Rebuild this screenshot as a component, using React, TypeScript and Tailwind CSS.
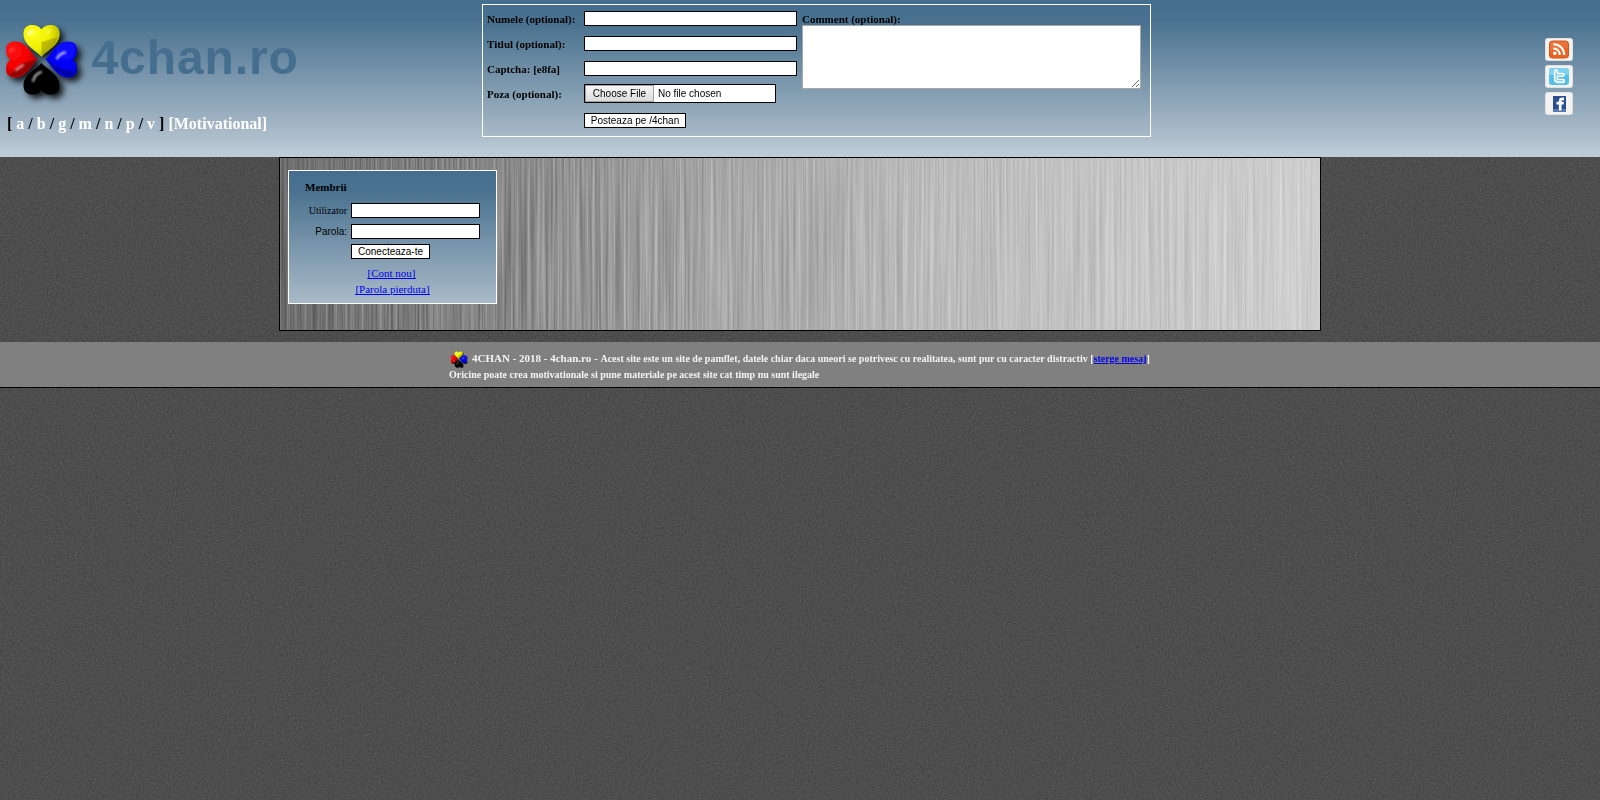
import React from 'react';

const HEART = 'M0 0 C-5 -6 -18 -11 -18 -22.5 C-18 -29 -14 -31.5 -9.5 -31.5 C-5 -31.5 -2 -30 0 -27 C2 -30 5 -31.5 9.5 -31.5 C14 -31.5 18 -29 18 -22.5 C18 -11 5 -6 0 0 Z';

function Clover({ className, id }: { className: string; id: string }) {
  const petals = [
    { x: 41.5, y: 38.5, r: 0, cx: -8, cy: -23, light: '#ffff20', mid: '#eeee00', dark: '#a0a000' },
    { x: 37.5, y: 41.5, r: -90, cx: 9, cy: -25, light: '#ff1010', mid: '#f50000', dark: '#900000' },
    { x: 45.5, y: 41.5, r: 90, cx: -9, cy: -20, light: '#1010ff', mid: '#0000f5', dark: '#0000a0' },
    { x: 41.5, y: 45, r: 180, cx: 0, cy: -20, light: '#000000', mid: '#000000', dark: '#000000' },
  ];
  return (
    <svg className={className} viewBox="0 0 90 90">
      <defs>
        <filter id={`${id}-shadow`} x="-30%" y="-30%" width="170%" height="170%">
          <feDropShadow dx="4" dy="4" stdDeviation="3" floodColor="#000" floodOpacity="0.85" />
        </filter>
        <filter id={`${id}-soft`} x="-50%" y="-50%" width="200%" height="200%">
          <feGaussianBlur stdDeviation="0.9" />
        </filter>
        {petals.map((p, i) => (
          <radialGradient key={i} id={`${id}-${i}`} gradientUnits="userSpaceOnUse" cx={p.cx} cy={p.cy} r="32">
            <stop offset="0" stopColor={p.light} />
            <stop offset="0.5" stopColor={p.mid} />
            <stop offset="1" stopColor={p.dark} />
          </radialGradient>
        ))}
      </defs>
      <g filter={`url(#${id}-shadow)`}>
        {petals.map((p, i) => (
          <path key={i} fill={`url(#${id}-${i})`} transform={`translate(${p.x} ${p.y}) rotate(${p.r})`} d={HEART} />
        ))}
      </g>
      <path d="M41.5 37.5 L41.5 24 L58 19 Q56 29 41.5 37.5Z" fill="#777700" opacity="0.4" />
      <path d="M36 42 L22 45 L10 57 Q22 62 36 42Z" fill="#600000" opacity="0.5" />
      <path d="M47 43 L60 50 L75 55 Q66 63 47 43Z" fill="#000060" opacity="0.4" />
      <g fill="none" stroke="#fff" strokeLinecap="round" filter={`url(#${id}-soft)`}>
        <path d="M29 15.5 L32 13.5" strokeWidth="3.4" opacity="0.65" />
        <path d="M47 15 L50 12.5" strokeWidth="2.6" opacity="0.35" />
        <path d="M13 31 L10 33" strokeWidth="3" opacity="0.2" />
        <path d="M16 52 L23 47" strokeWidth="1.8" opacity="0.75" />
        <path d="M57 40.5 Q59 36 65 34.5" strokeWidth="2" opacity="0.85" />
        <path d="M33 63 Q35 56 41 54" strokeWidth="2" opacity="0.75" />
      </g>
    </svg>
  );
}

function GrainTexture() {
  return (
    <svg className="[grid-area:1/1] h-full min-h-[800px] w-full" aria-hidden="true">
      <filter id="grain" x="0" y="0" width="100%" height="100%" colorInterpolationFilters="sRGB">
        <feTurbulence type="fractalNoise" baseFrequency="0.6" numOctaves="3" seed="4" />
        <feColorMatrix values="0.13 0 0 0 0.237  0.13 0 0 0 0.237  0.13 0 0 0 0.237  0 0 0 0 1" />
      </filter>
      <rect width="100%" height="100%" filter="url(#grain)" />
    </svg>
  );
}

function BrushedMetal() {
  return (
    <svg className="[grid-area:1/1] h-[172px] w-[1040px]" aria-hidden="true">
      <defs>
        <linearGradient id="metal">
          <stop offset="0" stopColor="#6d6d6d" />
          <stop offset="0.2" stopColor="#868686" />
          <stop offset="0.4" stopColor="#a3a3a3" />
          <stop offset="0.6" stopColor="#b8b8b8" />
          <stop offset="0.8" stopColor="#c5c5c5" />
          <stop offset="1" stopColor="#cecece" />
        </linearGradient>
        <filter id="streaks" x="0" y="0" width="100%" height="100%" colorInterpolationFilters="sRGB">
          <feTurbulence type="fractalNoise" baseFrequency="0.45 0.005" numOctaves="3" seed="11" />
          <feColorMatrix values="0.4 0 0 0 0.3  0.4 0 0 0 0.3  0.4 0 0 0 0.3  0 0 0 0 1" />
        </filter>
      </defs>
      <rect width="1040" height="172" fill="url(#metal)" />
      <rect width="1040" height="172" filter="url(#streaks)" className="mix-blend-overlay" />
    </svg>
  );
}

function Label({ children }: { children: React.ReactNode }) {
  return <div className="h-[25px] text-[11px] leading-[15px] font-bold">{children}</div>;
}

const BOARDS = ['a', 'b', 'g', 'm', 'n', 'p', 'v'];

function Header() {
  return (
    <header className="flex h-[157px] bg-linear-[180deg,#456e8e_0px,#4a7290_20px,#809bb0_84px,#a9bac8_132px,#bfcdd9_157px]">
      <div className="flex w-[482px] flex-col">
        <div className="flex h-[112px] pt-[18px]">
          <Clover id="logo" className="h-[90px] w-[90px]" />
          <div className="pt-[12px] pl-[1.5px] font-['Liberation_Sans',sans-serif] text-[48px] leading-[56px] font-bold tracking-[0.9px] text-[#456e8e]">4chan.ro</div>
        </div>
        <nav className="pl-[7px] text-[16px] leading-[24px] font-bold whitespace-pre">
          {'[ '}
          {BOARDS.map((b, i) => (
            <span key={b}>
              {i > 0 && ' / '}
              <a className="text-white">{b}</a>
            </span>
          ))}
          {' ] '}
          <a className="text-white">[Motivational]</a>
        </nav>
      </div>

      <form className="mt-[4px] flex h-[133px] w-[669px] border border-white bg-linear-[180deg,#456e8e_0px,#4a7290_20px,#809bb0_84px,#a9bac8_132px] pl-[4px]">
        <div className="w-[97px] pt-[7px]">
          <Label>Numele (optional):</Label>
          <Label>Titlul (optional):</Label>
          <Label>Captcha: [e8fa]</Label>
          <Label>Poza (optional):</Label>
        </div>
        <div className="flex w-[218px] flex-col items-start pt-[6px] font-['Liberation_Sans',sans-serif] text-[10px]">
          <input className="mb-[10px] h-[15px] w-[213px] border border-black bg-white" />
          <input className="mb-[10px] h-[15px] w-[213px] border border-black bg-white" />
          <input className="mb-[8px] h-[15px] w-[213px] border border-black bg-white" />
          <div className="mb-[10px] flex h-[19px] w-[192px] border border-black bg-white text-[10px] leading-[15px]">
            <button type="button" className="h-[17px] w-[69px] border border-[#a0a0a0] bg-linear-to-b from-[#f6f6f6] to-[#dcdcdc]">Choose File</button>
            <span className="pl-[4px] leading-[17px]">No file chosen</span>
          </div>
          <button type="button" className="h-[15px] w-[102px] border border-black bg-white leading-[13px]">Posteaza pe /4chan</button>
        </div>
        <div className="pt-[7px]">
          <div className="h-[13px] text-[11px] leading-[15px] font-bold">Comment (optional):</div>
          <textarea className="block h-[64px] w-[339px] resize border border-[#a9a9a9] bg-white" />
        </div>
      </form>

      <div className="ml-auto flex flex-col gap-[4px] pt-[38px] pr-[27px]">
        <svg className="h-[23px] w-[28px]" viewBox="0 0 28 23">
          <rect x="0.5" y="0.5" width="27" height="22" rx="2" fill="#f4f2f1" stroke="#dfe1e3" />
          <rect x="4.5" y="3" width="19" height="17" rx="3" fill="#ea6325" stroke="#d2561c" />
          <path d="M5 14 V6 Q5 3.5 8 3.5 H20 Q23 3.5 23 6 V10 Q14 9 5 14Z" fill="#f58a50" opacity="0.4" />
          <circle cx="9.8" cy="15.2" r="1.8" fill="#fff" />
          <path d="M8.2 10.5 A6.3 6.3 0 0 1 14.8 17 M8.2 6.2 A10.5 10.5 0 0 1 19.2 17" fill="none" stroke="#fff" strokeWidth="2.1" />
        </svg>
        <svg className="h-[23px] w-[28px]" viewBox="0 0 28 23">
          <rect x="0.5" y="0.5" width="27" height="22" rx="2" fill="#f4f2f1" stroke="#dfe1e3" />
          <rect x="4" y="3" width="20" height="17" rx="3" fill="#55c0e6" />
          <path d="M4 10 V6 Q4 3 7 3 H21 Q24 3 24 6 V10Z" fill="#7fd3ef" />
          <path d="M11 6.5 V13.5 Q11 16 13.5 16 H18 M11 9.9 H17.5" fill="none" stroke="#fff" strokeWidth="4.4" strokeLinecap="round" />
          <path d="M11 6.5 V13 Q11 15.8 13.5 15.8 H18 M11 10 H17.5" fill="none" stroke="#8fd6ee" strokeWidth="1.4" strokeLinecap="round" />
        </svg>
        <svg className="h-[23px] w-[28px]" viewBox="0 0 28 23">
          <rect x="0.5" y="0.5" width="27" height="22" rx="2" fill="#f4f2f1" stroke="#dfe1e3" />
          <rect x="8" y="4" width="13" height="16" fill="#294f92" />
          <rect x="8" y="17" width="13" height="3" fill="#5878b0" />
          <path d="M15.2 18.5 V9 Q15.2 6.9 17.3 6.9 H19 M11.5 11.2 H18.7" fill="none" stroke="#fff" strokeWidth="2.7" />
        </svg>
      </div>
    </header>
  );
}

function Members() {
  return (
    <div className="[grid-area:1/1] z-10 mt-[12px] ml-[8px] h-[134px] w-[209px] self-start border border-white bg-linear-[180deg,#456e8e_0px,#4a7290_20px,#809bb0_84px,#a9bac8_132px]">
      <div className="h-[32px] pt-[9px] pl-[16px] text-[11px] leading-[15px] font-bold">Membrii</div>
      <div className="flex h-[21px]">
        <div className="mr-[4px] w-[58px] text-right text-[10px] leading-[15px]">Utilizator</div>
        <input className="h-[15px] w-[129px] border border-black bg-white" />
      </div>
      <div className="flex h-[20px]">
        <div className="mr-[4px] w-[58px] text-right font-['Liberation_Sans',sans-serif] text-[10px] leading-[15px]">Parola:</div>
        <input className="h-[15px] w-[129px] border border-black bg-white" />
      </div>
      <button type="button" className="ml-[62px] block h-[15px] w-[79px] border border-black bg-white font-['Liberation_Sans',sans-serif] text-[10px] leading-[13px]">Conecteaza-te</button>
      <div className="mt-[6px] flex flex-col items-center text-[11px] leading-[16px] text-[#0000ee] underline">
        <a className="mr-[2px]">[Cont nou]</a>
        <a>[Parola pierduta]</a>
      </div>
    </div>
  );
}

export default function App() {
  return (
    <div className="grid min-h-screen w-full overflow-hidden bg-[#4b4b4b] font-['Liberation_Serif',serif] text-black">
      <GrainTexture />
      <div className="z-10 [grid-area:1/1]">
        <Header />
        <main className="ml-[279px] grid h-[174px] w-[1042px] border border-black">
          <BrushedMetal />
          <Members />
        </main>
        <footer className="mt-[11px] h-[46px] border-b border-black bg-[#808080] pl-[449px] text-[10px] font-bold text-[#f4f4f4]">
          <div className="flex h-[25px] pt-[7px] leading-[18px]">
            <Clover id="mini" className="mt-px mr-[2px] h-[20px] w-[21px]" />
            <div className="whitespace-pre">
              <span className="text-[11px]">4CHAN - 2018 - 4chan.ro - </span>
              Acest site este un site de pamflet, datele chiar daca uneori se potrivesc cu realitatea, sunt pur cu caracter distractiv [
              <a className="text-[#0000ee] underline">sterge mesaj</a>]
            </div>
          </div>
          <div className="leading-[16px]">Oricine poate crea motivationale si pune materiale pe acest site cat timp nu sunt ilegale</div>
        </footer>
      </div>
    </div>
  );
}
